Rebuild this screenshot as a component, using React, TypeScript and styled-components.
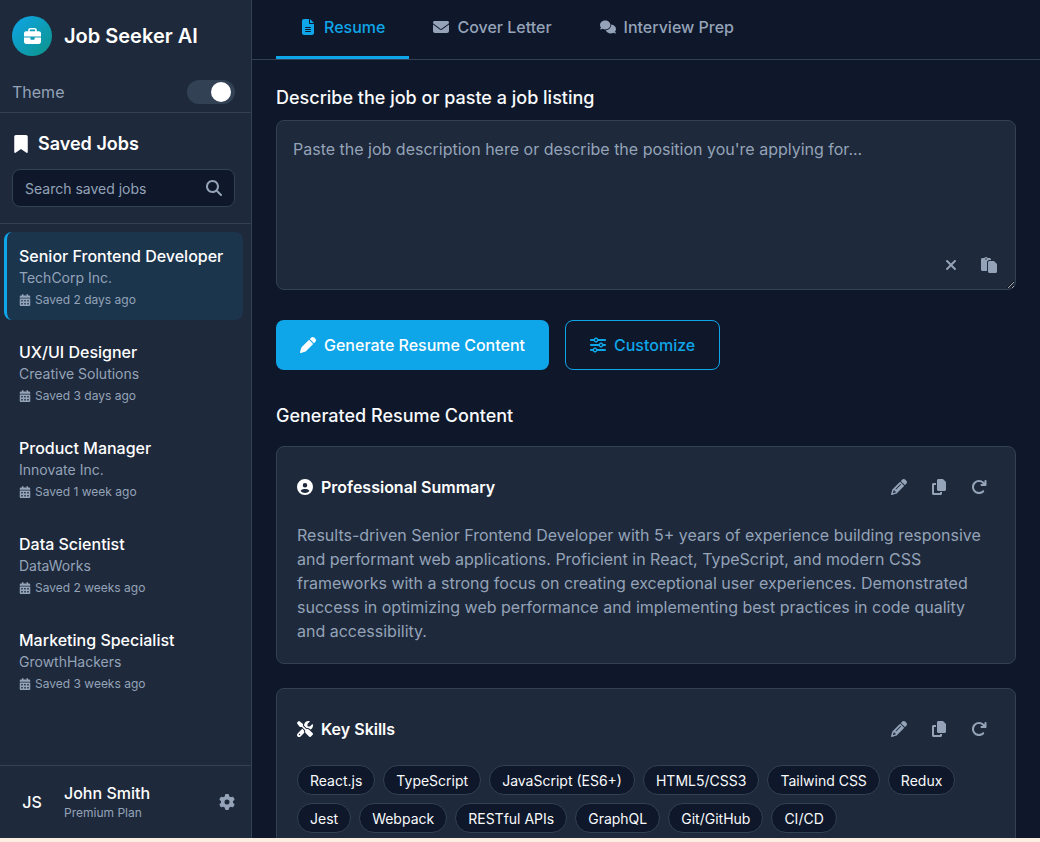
import React from "react";
import styled, { createGlobalStyle } from "styled-components";
import {
  FaBriefcase, FaBookmark, FaMagnifyingGlass, FaCalendarDays, FaGear, FaFileLines, FaEnvelope, FaComments,
  FaXmark, FaPaste, FaPen, FaSliders, FaCircleUser, FaScrewdriverWrench, FaPencil, FaCopy, FaArrowRotateRight,
} from "react-icons/fa6";

const Global = createGlobalStyle`
  * { box-sizing: border-box; }
  html, body { margin: 0; padding: 0; height: 100%; overflow: hidden; background: #fdeee0; }
  body { font-family: Inter, "Liberation Sans", sans-serif; }
`;

const Shell = styled.div`
  display: flex;
  height: 838px;
  overflow: hidden;
  color: #f8fafc;
  background: #0f172a;
`;

const Sidebar = styled.aside`
  width: 252px;
  flex: none;
  display: flex;
  flex-direction: column;
  background: #1e293b;
  border-right: 1px solid #334155;
`;

const Brand = styled.div`
  display: flex;
  align-items: center;
  gap: 12px;
  padding: 16px 12px 0;
  height: 56px;
  box-sizing: content-box;
  height: 40px;
`;

const Logo = styled.div`
  width: 40px;
  height: 40px;
  border-radius: 50%;
  background: linear-gradient(135deg, #0ea5e9, #0d9488);
  display: flex;
  align-items: center;
  justify-content: center;
  color: #fff;
  font-size: 17px;
`;

const BrandName = styled.div`
  font-size: 20px;
  font-weight: 600;
  color: #fff;
`;

const ThemeRow = styled.div`
  display: flex;
  align-items: center;
  justify-content: space-between;
  margin-top: 24px;
  padding: 0 16px 8px 12px;
  height: 33px;
  border-bottom: 1px solid #334155;
  font-size: 16px;
  color: #94a3b8;
`;

const Toggle = styled.div`
  width: 48px;
  height: 24px;
  border-radius: 12px;
  background: #334155;
  display: flex;
  align-items: center;
  justify-content: flex-end;
  padding-right: 4px;
`;

const Knob = styled.span`
  width: 20px;
  height: 20px;
  border-radius: 50%;
  background: #fff;
`;

const SavedHead = styled.div`
  padding: 18px 16px 16px 12px;
  border-bottom: 1px solid #334155;
`;

const SavedTitle = styled.h2`
  display: flex;
  align-items: center;
  gap: 8px;
  margin: 0 0 12px;
  font-size: 18px;
  line-height: 26px;
  font-weight: 600;
  color: #fff;
  svg { font-size: 18px; }
`;

const SearchBox = styled.div`
  height: 38px;
  display: flex;
  align-items: center;
  justify-content: space-between;
  padding: 0 12px;
  background: #0f172a;
  border: 1px solid #334155;
  border-radius: 8px;
  color: #94a3b8;
  font-size: 14px;
  svg { font-size: 16px; }
`;

const JobList = styled.div`
  flex: 1;
  display: flex;
  flex-direction: column;
  gap: 8px;
  padding: 8px 8px 8px 4px;
`;

const Job = styled.div<{ $active?: boolean }>`
  height: 88px;
  padding: 12px ${(p) => (p.$active ? "12px" : "12px")} 12px ${(p) => (p.$active ? "12px" : "15px")};
  border-radius: 8px;
  background: ${(p) => (p.$active ? "rgba(14,165,233,0.1)" : "transparent")};
  border-left: ${(p) => (p.$active ? "3px solid #0ea5e9" : "none")};
`;

const JobTitle = styled.div`
  font-size: 16px;
  line-height: 24px;
  font-weight: 500;
  color: #fff;
`;

const JobCompany = styled.div`
  font-size: 14px;
  line-height: 20px;
  color: #94a3b8;
`;

const JobMeta = styled.div`
  display: flex;
  align-items: center;
  gap: 4px;
  margin-top: 2px;
  font-size: 12px;
  line-height: 20px;
  color: #94a3b8;
  svg { font-size: 12px; }
`;

const Footer = styled.div`
  height: 73px;
  flex: none;
  display: flex;
  align-items: center;
  gap: 12px;
  padding: 0 16px 0 12px;
  border-top: 1px solid #334155;
`;

const Avatar = styled.div`
  width: 40px;
  height: 40px;
  display: flex;
  align-items: center;
  justify-content: center;
  font-size: 16px;
  font-weight: 500;
  color: #fff;
`;

const UserInfo = styled.div`
  flex: 1;
`;

const UserName = styled.div`
  font-size: 16px;
  line-height: 22px;
  font-weight: 500;
  color: #fff;
`;

const UserPlan = styled.div`
  font-size: 12px;
  line-height: 18px;
  color: #94a3b8;
`;

const Settings = styled.div`
  color: #94a3b8;
  font-size: 16px;
  display: flex;
`;

const Main = styled.main`
  flex: 1;
  min-width: 0;
  display: flex;
  flex-direction: column;
`;

const Tabs = styled.nav`
  height: 60px;
  flex: none;
  display: flex;
  padding-left: 24px;
  border-bottom: 1px solid #334155;
`;

const Tab = styled.div<{ $active?: boolean }>`
  height: 59px;
  display: flex;
  align-items: center;
  gap: 8px;
  padding: 0 24px 3px;
  font-size: 16px;
  font-weight: 500;
  color: ${(p) => (p.$active ? "#0ea5e9" : "#94a3b8")};
  border-bottom: 3px solid ${(p) => (p.$active ? "#0ea5e9" : "transparent")};
`;

const Scroll = styled.div`
  flex: 1;
  overflow-y: auto;
  padding: 24px;
  &::-webkit-scrollbar { width: 2px; }
  &::-webkit-scrollbar-track { background: #0f172a; }
  &::-webkit-scrollbar-thumb { background: #334155; }
`;

const FieldLabel = styled.label`
  display: block;
  font-size: 18px;
  line-height: 28px;
  font-weight: 500;
  color: #f8fafc;
  margin-bottom: 8px;
`;

const InputWrap = styled.div`
  position: relative;
  height: 170px;
  margin-bottom: 30px;
`;

const Area = styled.textarea`
  display: block;
  width: 100%;
  height: 170px;
  padding: 16px;
  background: #1e293b;
  border: 1px solid #334155;
  border-radius: 8px;
  color: #f8fafc;
  font-family: inherit;
  font-size: 16px;
  line-height: 24px;
  outline: none;
  &::placeholder { color: #94a3b8; opacity: 1; }
`;

const AreaActions = styled.div`
  position: absolute;
  right: 19px;
  bottom: 17px;
  display: flex;
  align-items: center;
  gap: 22px;
  color: #94a3b8;
  font-size: 16px;
  svg { display: block; }
`;

const Actions = styled.div`
  display: flex;
  gap: 16px;
  margin-bottom: 32px;
`;

const Button = styled.button<{ $primary?: boolean }>`
  height: 50px;
  display: flex;
  align-items: center;
  gap: 8px;
  padding: 0 24px;
  border-radius: 8px;
  font-family: inherit;
  font-size: 16px;
  font-weight: 500;
  color: ${(p) => (p.$primary ? "#fff" : "#0ea5e9")};
  background: ${(p) => (p.$primary ? "#0ea5e9" : "transparent")};
  border: ${(p) => (p.$primary ? "none" : "1px solid #0ea5e9")};
`;

const SectionTitle = styled.h2`
  margin: 0 0 16px;
  font-size: 18px;
  line-height: 28px;
  font-weight: 500;
  color: #f8fafc;
`;

const Card = styled.section`
  padding: 20px;
  margin-bottom: 24px;
  background: #1e293b;
  border: 1px solid #334155;
  border-radius: 8px;
`;

const CardHead = styled.div`
  display: flex;
  align-items: center;
  justify-content: space-between;
  height: 40px;
  margin-bottom: 16px;
`;

const CardTitle = styled.h3`
  display: flex;
  align-items: center;
  gap: 8px;
  margin: 0;
  font-size: 16px;
  font-weight: 600;
  color: #fff;
`;

const CardTools = styled.div`
  display: flex;
  align-items: center;
  gap: 24px;
  padding-right: 8px;
  color: #94a3b8;
  font-size: 16px;
  svg { display: block; }
`;

const Para = styled.p`
  margin: 0;
  font-size: 16px;
  line-height: 24px;
  color: #94a3b8;
`;

const Chips = styled.div`
  display: flex;
  flex-wrap: wrap;
  gap: 8px;
`;

const Chip = styled.span`
  height: 30px;
  display: flex;
  align-items: center;
  padding: 0 12px;
  background: #0f172a;
  border: 1px solid #334155;
  border-radius: 15px;
  font-size: 14px;
  color: #f8fafc;
`;

const jobs = [
  ["Senior Frontend Developer", "TechCorp Inc.", "Saved 2 days ago"],
  ["UX/UI Designer", "Creative Solutions", "Saved 3 days ago"],
  ["Product Manager", "Innovate Inc.", "Saved 1 week ago"],
  ["Data Scientist", "DataWorks", "Saved 2 weeks ago"],
  ["Marketing Specialist", "GrowthHackers", "Saved 3 weeks ago"],
];

const skills = [
  "React.js", "TypeScript", "JavaScript (ES6+)", "HTML5/CSS3", "Tailwind CSS", "Redux",
  "Jest", "Webpack", "RESTful APIs", "GraphQL", "Git/GitHub", "CI/CD",
];

const Tools = () => (
  <CardTools>
    <FaPencil />
    <FaCopy />
    <FaArrowRotateRight />
  </CardTools>
);

export default function App() {
  return (
    <Shell>
      <Global />
      <Sidebar>
        <Brand>
          <Logo><FaBriefcase /></Logo>
          <BrandName>Job Seeker AI</BrandName>
        </Brand>
        <ThemeRow>
          Theme
          <Toggle><Knob /></Toggle>
        </ThemeRow>
        <SavedHead>
          <SavedTitle><FaBookmark />Saved Jobs</SavedTitle>
          <SearchBox>Search saved jobs<FaMagnifyingGlass /></SearchBox>
        </SavedHead>
        <JobList>
          {jobs.map(([title, company, saved], i) => (
            <Job key={title} $active={i === 0}>
              <JobTitle>{title}</JobTitle>
              <JobCompany>{company}</JobCompany>
              <JobMeta><FaCalendarDays />{saved}</JobMeta>
            </Job>
          ))}
        </JobList>
        <Footer>
          <Avatar>JS</Avatar>
          <UserInfo>
            <UserName>John Smith</UserName>
            <UserPlan>Premium Plan</UserPlan>
          </UserInfo>
          <Settings><FaGear /></Settings>
        </Footer>
      </Sidebar>
      <Main>
        <Tabs>
          <Tab $active><FaFileLines />Resume</Tab>
          <Tab><FaEnvelope />Cover Letter</Tab>
          <Tab><FaComments />Interview Prep</Tab>
        </Tabs>
        <Scroll>
          <FieldLabel>Describe the job or paste a job listing</FieldLabel>
          <InputWrap>
            <Area placeholder="Paste the job description here or describe the position you're applying for..." />
            <AreaActions>
              <FaXmark />
              <FaPaste />
            </AreaActions>
          </InputWrap>
          <Actions>
            <Button $primary><FaPen />Generate Resume Content</Button>
            <Button><FaSliders />Customize</Button>
          </Actions>
          <SectionTitle>Generated Resume Content</SectionTitle>
          <Card>
            <CardHead>
              <CardTitle><FaCircleUser />Professional Summary</CardTitle>
              <Tools />
            </CardHead>
            <Para>
              Results-driven Senior Frontend Developer with 5+ years of experience building responsive and performant web applications. Proficient in React, TypeScript, and modern CSS frameworks with a strong focus on creating exceptional user experiences. Demonstrated success in optimizing web performance and implementing best practices in code quality and accessibility.
            </Para>
          </Card>
          <Card>
            <CardHead>
              <CardTitle><FaScrewdriverWrench />Key Skills</CardTitle>
              <Tools />
            </CardHead>
            <Chips>
              {skills.map((s) => <Chip key={s}>{s}</Chip>)}
            </Chips>
          </Card>
          <Card>
            <CardHead>
              <CardTitle><FaBriefcase />Experience Highlights</CardTitle>
              <Tools />
            </CardHead>
            <Para>
              Led the migration of a legacy storefront to React and TypeScript, reducing page load time by 40%. Mentored four engineers and introduced automated testing across the team.
            </Para>
          </Card>
        </Scroll>
      </Main>
    </Shell>
  );
}
